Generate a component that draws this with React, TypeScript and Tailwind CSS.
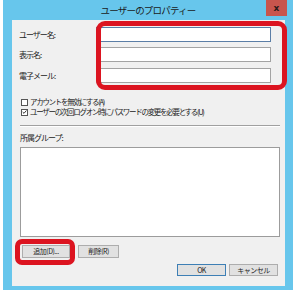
const font = "font-['Meiryo_UI','Noto_Sans_CJK_JP',sans-serif]"

function Field({ label, focused, className }: { label: string; focused?: boolean; className?: string }) {
  return (
    <div className={`flex items-center ${className ?? ''}`}>
      <span className="w-[84px] pl-[7px] text-[8px] tracking-[-1px] text-[#222]">{label}</span>
      <div
        className={`w-[175px] h-[15px] bg-white border flex items-center ${
          focused ? 'border-[#5b7ea6]' : 'border-[#a3a3a3]'
        }`}
      >
        {focused && <div className="ml-[2px] w-px h-[9px] bg-[#222]" />}
      </div>
    </div>
  )
}

function Check({ label, checked, className }: { label: string; checked?: boolean; className?: string }) {
  return (
    <div className={`flex items-center h-[10px] pl-[9px] gap-[2px] ${className ?? ''}`}>
      <div className="w-[7px] h-[7px] bg-white border border-[#555] flex items-center justify-center">
        {checked && (
          <svg width="6" height="6" viewBox="0 0 6 6">
            <path d="M0.8 3 L2.4 4.6 L5.3 1.2" fill="none" stroke="#222" strokeWidth="1.1" />
          </svg>
        )}
      </div>
      <span className="text-[7.5px] tracking-[-1.3px] text-[#222] leading-none whitespace-nowrap">{label}</span>
    </div>
  )
}

function Btn({ label, primary, className }: { label: string; primary?: boolean; className?: string }) {
  return (
    <div
      className={`flex items-center justify-center bg-[#e1e1e1] border text-[7px] tracking-[-0.5px] text-[#222] leading-none ${
        primary ? 'border-[#3d7fb5]' : 'border-[#adadad]'
      } ${className ?? ''}`}
    >
      {label}
    </div>
  )
}

export default function App() {
  return (
    <div className={`w-[302px] h-[291px] bg-white relative overflow-hidden ${font}`}>
      <div className="ml-[3px] w-[290px] h-[290px] bg-[#67c6ec] flex flex-col relative">
        <div className="h-[20px] flex items-center justify-center text-[9.5px] tracking-[-0.8px] text-[#1a1a1a]">
          ユーザーのプロパティー
        </div>
        <div className="absolute left-[263px] top-0 w-[21px] h-[16px] bg-[#c8554d] flex items-center justify-center">
          <span className="text-[9px] font-bold text-[#2a1a1a] leading-none font-['DejaVu_Sans',sans-serif]">x</span>
        </div>

        <div className="ml-[9px] w-[273px] h-[266px] bg-[#f0f0f0] relative flex flex-col">
          <Field label="ユーザー名:" focused className="mt-[7px]" />
          <Field label="表示名:" className="mt-[5px]" />
          <Field label="電子メール:" className="mt-[6px]" />

          <Check label="アカウントを無効にする(A)" className="mt-[14px]" />
          <Check label="ユーザーの次回ログオン時にパスワードの変更を必要とする(U)" checked />

          <div className="mt-[8px] ml-[8px] w-[260px] h-[2px] border-t border-[#a0a0a0] border-b border-b-white" />

          <div className="mt-[6px] h-[10px] pl-[8px] flex items-center text-[8px] tracking-[-1px] text-[#222]">
            所属グループ:
          </div>

          <div className="mt-[4px] ml-[8px] w-[260px] h-[90px] bg-white border border-[#9c9c9c]" />

          <div className="mt-[8px] ml-[10px] flex gap-[8px]">
            <Btn label="追加(D)..." className="w-[48px] h-[13px]" />
            <Btn label="削除(R)" className="w-[41px] h-[13px]" />
          </div>

          <div className="mt-[6px] ml-[165px] flex gap-[3px]">
            <Btn label="OK" primary className="w-[49px] h-[12px]" />
            <Btn label="キャンセル" className="w-[49px] h-[12px]" />
          </div>

          <div className="absolute left-[84px] top-[1px] w-[191px] h-[69px] border-[5px] border-[#dc1420] rounded-[9px]" />
          <div className="absolute left-[3px] top-[219px] w-[60px] h-[26px] border-[5px] border-[#dc1420] rounded-[7px]" />
        </div>
      </div>
    </div>
  )
}
